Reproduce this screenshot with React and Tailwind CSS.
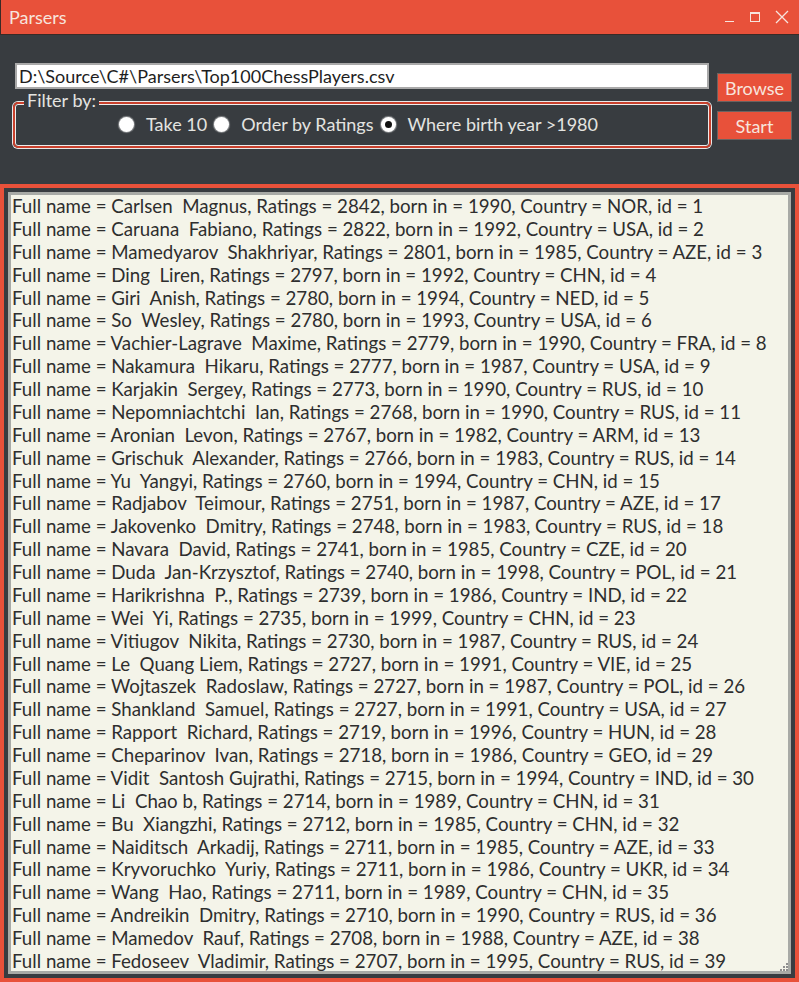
import React from 'react';

const players = [
  ['Carlsen  Magnus', 2842, 1990, 'NOR', 1],
  ['Caruana  Fabiano', 2822, 1992, 'USA', 2],
  ['Mamedyarov  Shakhriyar', 2801, 1985, 'AZE', 3],
  ['Ding  Liren', 2797, 1992, 'CHN', 4],
  ['Giri  Anish', 2780, 1994, 'NED', 5],
  ['So  Wesley', 2780, 1993, 'USA', 6],
  ['Vachier-Lagrave  Maxime', 2779, 1990, 'FRA', 8],
  ['Nakamura  Hikaru', 2777, 1987, 'USA', 9],
  ['Karjakin  Sergey', 2773, 1990, 'RUS', 10],
  ['Nepomniachtchi  Ian', 2768, 1990, 'RUS', 11],
  ['Aronian  Levon', 2767, 1982, 'ARM', 13],
  ['Grischuk  Alexander', 2766, 1983, 'RUS', 14],
  ['Yu  Yangyi', 2760, 1994, 'CHN', 15],
  ['Radjabov  Teimour', 2751, 1987, 'AZE', 17],
  ['Jakovenko  Dmitry', 2748, 1983, 'RUS', 18],
  ['Navara  David', 2741, 1985, 'CZE', 20],
  ['Duda  Jan-Krzysztof', 2740, 1998, 'POL', 21],
  ['Harikrishna  P.', 2739, 1986, 'IND', 22],
  ['Wei  Yi', 2735, 1999, 'CHN', 23],
  ['Vitiugov  Nikita', 2730, 1987, 'RUS', 24],
  ['Le  Quang Liem', 2727, 1991, 'VIE', 25],
  ['Wojtaszek  Radoslaw', 2727, 1987, 'POL', 26],
  ['Shankland  Samuel', 2727, 1991, 'USA', 27],
  ['Rapport  Richard', 2719, 1996, 'HUN', 28],
  ['Cheparinov  Ivan', 2718, 1986, 'GEO', 29],
  ['Vidit  Santosh Gujrathi', 2715, 1994, 'IND', 30],
  ['Li  Chao b', 2714, 1989, 'CHN', 31],
  ['Bu  Xiangzhi', 2712, 1985, 'CHN', 32],
  ['Naiditsch  Arkadij', 2711, 1985, 'AZE', 33],
  ['Kryvoruchko  Yuriy', 2711, 1986, 'UKR', 34],
  ['Wang  Hao', 2711, 1989, 'CHN', 35],
  ['Andreikin  Dmitry', 2710, 1990, 'RUS', 36],
  ['Mamedov  Rauf', 2708, 1988, 'AZE', 38],
  ['Fedoseev  Vladimir', 2707, 1995, 'RUS', 39],
];

function Radio({ checked, label }) {
  return (
    <label className="flex items-center gap-[12px]">
      <span className="w-[15px] h-[15px] rounded-full bg-white flex items-center justify-center shadow-[0_0_1px_1px_rgba(255,255,255,0.4)]">
        {checked && <span className="w-[7px] h-[7px] rounded-full bg-[#111]" />}
      </span>
      <span>{label}</span>
    </label>
  );
}

export default function App() {
  return (
    <div className="w-[799px] h-[982px] flex flex-col bg-[#383c40] font-['Lato',sans-serif] overflow-hidden">
      {/* TITLE BAR */}
      <div className="h-[35px] flex items-center bg-[#e8513a] border-l border-b border-[#3a2a26] shrink-0">
        <span className="pl-[8px] text-[18px] text-[#f7e4dd]">Parsers</span>
        <div className="ml-auto flex items-center gap-[15px] pr-[9px] text-[#f7e4dd]">
          <span className="w-[10px] h-[10px] flex items-end"><span className="w-[9px] h-px bg-[#f7e4dd] mt-[13px]" /></span>
          <span className="w-[10px] h-[10px] border border-[#f7e4dd] border-t-2" />
          <svg width="14" height="14" viewBox="0 0 14 14" className="mr-[1px]">
            <path d="M1 1 L13 13 M13 1 L1 13" stroke="#f7e4dd" strokeWidth="1.3" />
          </svg>
        </div>
      </div>

      {/* TOP CONTROLS */}
      <div className="h-[149px] flex pl-[13px] pr-[7px] pt-[28px] gap-[6px] shrink-0">
        <div className="w-[698px] flex flex-col">
          <div className="ml-[2px] w-[694px] h-[26px] bg-white border-2 border-[#a9a9a9] flex items-center px-[2px] text-[18px] text-[#1e1e1e] leading-none">
            D:\Source\C#\Parsers\Top100ChessPlayers.csv
          </div>
          <div className="relative mt-[13px] h-[46px] rounded-[5px] border-2 border-[#c8402c] ring-1 ring-[#e9e9e9]">
            <div className="absolute inset-0 rounded-[3px] border border-[#ececec]" />
            <span className="absolute -top-[15px] left-[9px] px-[3px] bg-[#383c40] text-[18px] text-[#e4e4e0] leading-[22px]">Filter by:</span>
            <div className="h-full flex items-center pl-[104px] gap-[7px] text-[18px] text-[#e4e4e0] -mt-[1px]">
              <Radio label="Take 10" />
              <Radio label="Order by Ratings" />
              <Radio checked label="Where birth year >1980" />
            </div>
          </div>
        </div>
        <div className="flex flex-col gap-[9px] pt-[10px]">
          <button className="w-[75px] h-[29px] bg-[#e8513a] border border-[#6b6361] text-[18px] text-[#f7e4dd] leading-none">Browse</button>
          <button className="w-[75px] h-[29px] bg-[#e8513a] border border-[#6b6361] text-[18px] text-[#f7e4dd] leading-none">Start</button>
        </div>
      </div>

      {/* RESULTS */}
      <div className="flex-1 border-4 border-[#e8513a] p-[4px] flex min-h-0">
        <div className="relative flex-1 border-[3px] border-[#a8aaa6] bg-[#f4f4e9] pl-[1px] overflow-hidden">
          {players.map(([name, rating, born, country, id]) => (
            <div key={id} className="whitespace-pre text-[18.7px] leading-[22.88px] text-[#2e2e2e]">
              {`Full name = ${name}, Ratings = ${rating}, born in = ${born}, Country = ${country}, id = ${id}`}
            </div>
          ))}
          <svg width="10" height="10" viewBox="0 0 10 10" className="absolute right-0 bottom-0">
            {[[8, 0], [8, 3], [5, 3], [8, 6], [5, 6], [2, 6]].map(([x, y], i) => (
              <rect key={i} x={x} y={y + 2} width="2" height="2" fill="#8f8f8f" />
            ))}
          </svg>
        </div>
      </div>
    </div>
  );
}
